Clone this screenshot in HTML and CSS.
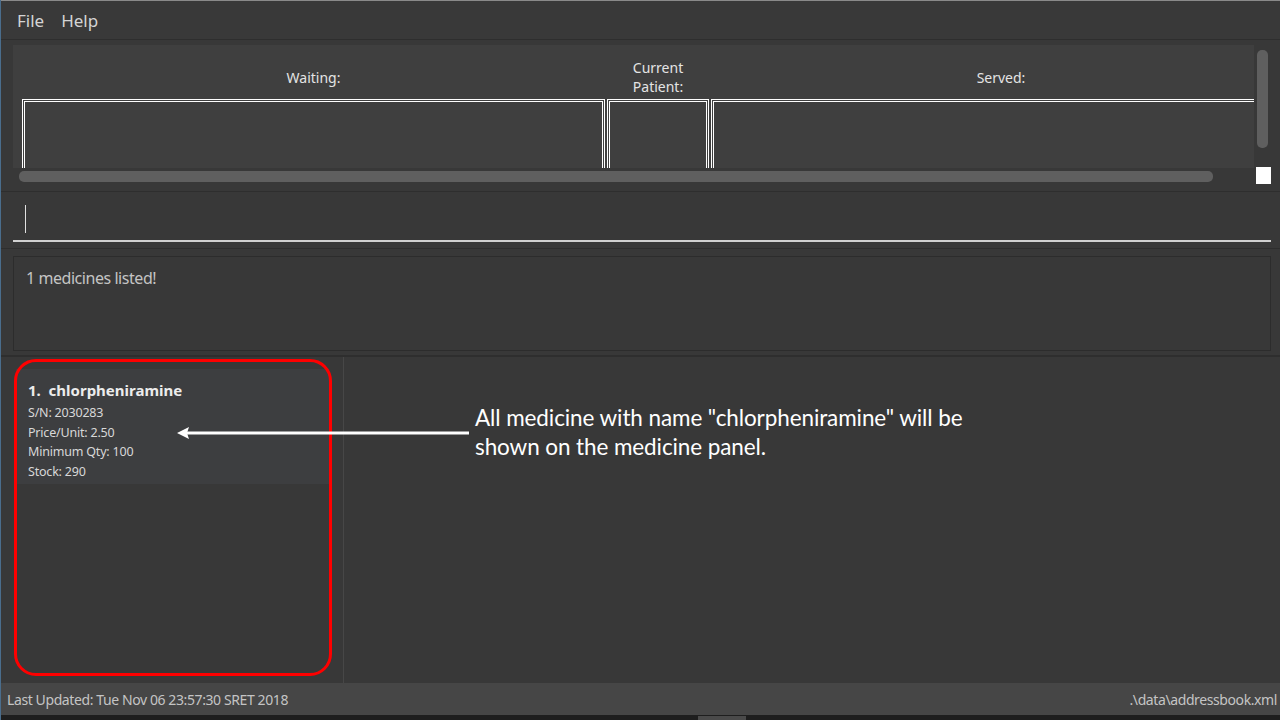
FILE: index.html
```html
<!DOCTYPE html>
<html>
<head>
<meta charset="utf-8">
<link rel="stylesheet" href="styles.css">
</head>
<body>
<div class="app">
  <div class="menubar">
    <span class="menu-item">File</span>
    <span class="menu-item">Help</span>
  </div>

  <div class="queue-section">
    <div class="queue-row">
      <div class="queue-panel">
        <div class="qcol qcol-waiting">
          <div class="qlabel">Waiting:</div>
          <div class="qbox"></div>
        </div>
        <div class="qcol qcol-current">
          <div class="qlabel">Current<br>Patient:</div>
          <div class="qbox"></div>
        </div>
        <div class="qcol qcol-served">
          <div class="qlabel">Served:</div>
          <div class="qbox"></div>
        </div>
      </div>
      <div class="vscroll"></div>
    </div>
    <div class="hscroll-row">
      <div class="hscroll"></div>
      <div class="corner"></div>
    </div>
  </div>

  <div class="command-section">
    <div class="command-box"><span class="caret"></span></div>
  </div>

  <div class="result-section">
    <div class="result-box">1 medicines listed!</div>
  </div>

  <div class="main-section">
    <div class="list-panel">
      <div class="card">
        <div class="card-title">1.&nbsp; chlorpheniramine</div>
        <div class="card-line">S/N: 2030283</div>
        <div class="card-line">Price/Unit: 2.50</div>
        <div class="card-line">Minimum Qty: 100</div>
        <div class="card-line">Stock: 290</div>
      </div>
    </div>
    <div class="browser-panel"></div>
  </div>

  <div class="statusbar">
    <span class="status-left">Last Updated: Tue Nov 06 23:57:30 SRET 2018</span>
    <span class="status-right">.\data\addressbook.xml</span>
  </div>
  <div class="bottom-strip"><div class="strip-tab"></div></div>

  <div class="highlight"></div>
  <svg class="arrow" width="300" height="16" viewBox="0 0 300 16">
    <line x1="8" y1="8" x2="292" y2="8" stroke="#ffffff" stroke-width="3"/>
    <polygon points="0,8 12,2 10,8 12,14" fill="#ffffff"/>
  </svg>
  <div class="annotation">All medicine with name "chlorpheniramine" will be<br>shown on the medicine panel.</div>
</div>
</body>
</html>
```

FILE: styles.css
```css
* { box-sizing: border-box; }
html, body { margin: 0; padding: 0; }
body {
  width: 1280px;
  height: 720px;
  overflow: hidden;
  background: #383838;
  font-family: "Open Sans", "Noto Sans", sans-serif;
}
.app {
  position: relative;
  width: 1280px;
  height: 720px;
  display: flex;
  flex-direction: column;
  background: #383838;
  border-left: 1px solid #4a6d8c;
}
.menubar {
  height: 40px;
  flex: none;
  display: flex;
  align-items: center;
  padding-left: 16px;
  gap: 17px;
  background: #393939;
  border-top: 1px solid #8a8a8a;
  border-bottom: 1px solid #2e2e2e;
}
.menu-item {
  color: #d4d4d4;
  font-size: 17px;
  font-family: "Noto Sans", "Open Sans", sans-serif;
}
.queue-section {
  height: 152px;
  flex: none;
  padding: 5px 0 0 12px;
  border-bottom: 1px solid #2e2e2e;
}
.queue-row {
  display: flex;
  height: 123px;
}
.queue-panel {
  width: 1241px;
  height: 123px;
  background: #3f3f3f;
  display: flex;
  gap: 2px;
  padding-left: 9px;
  overflow: hidden;
}
.qcol {
  display: flex;
  flex-direction: column;
  flex: none;
}
.qcol-waiting { width: 583px; }
.qcol-current { width: 102px; }
.qcol-served { width: 580px; }
.qlabel {
  height: 54px;
  padding-top: 10px;
  display: flex;
  align-items: center;
  justify-content: center;
  text-align: center;
  color: #e4e4e4;
  font-size: 14px;
  line-height: 19px;
  font-family: "Noto Sans", sans-serif;
}
.qbox {
  flex: 1;
  border: 3px double #ffffff;
  border-bottom: none;
}
.vscroll {
  width: 11px;
  height: 98px;
  margin: 5px 0 0 3px;
  background: #5f5f5f;
  border-radius: 5px;
}
.hscroll-row {
  display: flex;
  align-items: flex-start;
  margin-top: 3px;
}
.hscroll {
  width: 1194px;
  height: 11px;
  margin-left: 6px;
  background: #5f5f5f;
  border-radius: 5px;
}
.corner {
  width: 15px;
  height: 17px;
  margin: -4px 0 0 43px;
  background: #ffffff;
}
.command-section {
  height: 57px;
  flex: none;
  padding: 0 9px 0 12px;
  border-bottom: 1px solid #2e2e2e;
}
.command-box {
  height: 50px;
  border-bottom: 2px solid #d0d0d0;
  padding: 13px 0 0 12px;
}
.caret {
  display: block;
  width: 1px;
  height: 28px;
  background: #e0e0e0;
}
.result-section {
  height: 108px;
  flex: none;
  padding: 7px 9px 0 12px;
  border-bottom: 2px solid #2e2e2e;
}
.result-box {
  height: 95px;
  border: 1px solid #2c2c2c;
  padding: 9px 12px;
  color: #c4c4c4;
  font-size: 16px;
  line-height: 24px;
  font-family: "Noto Sans", sans-serif;
  letter-spacing: -0.45px;
}
.main-section {
  flex: 1;
  display: flex;
}
.list-panel {
  width: 343px;
  flex: none;
  padding: 12px 14px 0 15px;
  border-right: 1px solid #474747;
}
.card {
  height: 115px;
  background: #3d3e40;
  padding: 11px 12px 0;
  color: #d8d8d8;
  font-family: "Noto Sans", sans-serif;
}
.card-title {
  font-size: 15px;
  font-weight: bold;
  color: #ececec;
  line-height: 20px;
  margin-bottom: 3px;
}
.card-line {
  font-size: 12.5px;
  line-height: 19.5px;
  letter-spacing: -0.2px;
}
.browser-panel { flex: 1; }
.statusbar {
  height: 32px;
  flex: none;
  background: #464646;
  display: flex;
  align-items: center;
  justify-content: space-between;
  padding: 0 3px 0 6px;
  color: #c4c4c4;
  font-size: 14px;
  font-family: "Noto Sans", sans-serif;
  letter-spacing: -0.4px;
}
.bottom-strip {
  height: 5px;
  flex: none;
  background: #1e1e1e;
  position: relative;
}
.strip-tab {
  position: absolute;
  left: 697px;
  top: 1px;
  width: 48px;
  height: 4px;
  background: #4a4a4a;
}
.highlight {
  position: absolute;
  left: 13px;
  top: 359px;
  width: 318px;
  height: 317px;
  border: 3px solid #ff0000;
  border-radius: 22px;
}
.arrow {
  position: absolute;
  left: 176px;
  top: 425px;
}
.annotation {
  position: absolute;
  left: 474px;
  top: 403px;
  color: #ffffff;
  font-family: "Lato", sans-serif;
  font-size: 22.5px;
  line-height: 29px;
  letter-spacing: -0.1px;
}
```
